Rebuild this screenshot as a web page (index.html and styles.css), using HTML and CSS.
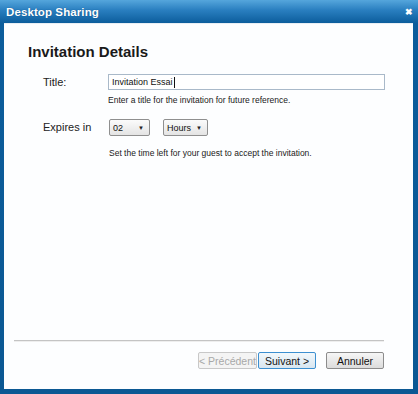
FILE: index.html
```html
<!DOCTYPE html>
<html lang="en">
<head>
    <meta charset="UTF-8">
    <title>Desktop Sharing</title>
    <link rel="stylesheet" href="styles.css">
</head>
<body>
    <div class="window">
        <div class="titlebar">
            <span class="titulo-janela">Desktop Sharing</span>
            <span class="fechar">&#x2716;</span>
        </div>

        <div class="conteudo">
            <h1 class="cabecalho">Invitation Details</h1>

            <div class="linha">
                <span class="rotulo">Title:</span>
                <div class="campo">
                    <div class="entrada">Invitation Essai<span class="cursor"></span></div>
                    <p class="ajuda">Enter a title for the invitation for future reference.</p>
                </div>
            </div>

            <div class="linha linha-expira">
                <span class="rotulo">Expires in</span>
                <div class="campo">
                    <div class="selects">
                        <div class="select sel-numero">02 <span class="seta">&#9660;</span></div>
                        <div class="select sel-unidade">Hours <span class="seta">&#9660;</span></div>
                    </div>
                    <p class="ajuda ajuda-expira">Set the time left for your guest to accept the invitation.</p>
                </div>
            </div>

            <div class="espaco"></div>

            <div class="separador"></div>

            <div class="botoes">
                <button class="botao desativado">&lt; Précédent</button>
                <button class="botao foco">Suivant &gt;</button>
                <button class="botao annuler">Annuler</button>
            </div>
        </div>
    </div>
</body>
</html>
```

FILE: styles.css
```css
body {
    margin: 0;
    font-family: "Liberation Sans", Arial, sans-serif;
}

.window {
    width: 418px;
    height: 394px;
    display: flex;
    flex-direction: column;
    background: linear-gradient(to bottom, #55a6dc 0px, #2a7fc0 10px, #0c5d9c 23px, #0b5893 100%);
}

.titlebar {
    height: 23px;
    display: flex;
    align-items: center;
    justify-content: space-between;
    padding: 0 6px 0 6px;
}

.titulo-janela {
    color: white;
    font-size: 11.5px;
    font-weight: bold;
    letter-spacing: 0.1px;
    text-shadow: 0 0 1px #0a4a80;
}

.fechar {
    color: white;
    font-size: 9px;
    font-weight: bold;
    margin-right: -1px;
}

.conteudo {
    flex: 1;
    background-color: #fdfeff;
    margin: 0 5px 5px 4px;
    display: flex;
    flex-direction: column;
    border-top: 1px solid #e8eef4;
}

.cabecalho {
    margin: 19px 0 0 24px;
    font-size: 15px;
    font-weight: bold;
    color: #1a1a1a;
}

.linha {
    display: flex;
    margin-top: 14px;
}

.linha-expira {
    margin-top: 14px;
}

.rotulo {
    width: 65px;
    margin-left: 39px;
    font-size: 11px;
    color: #222;
    padding-top: 2px;
}

.campo {
    display: flex;
    flex-direction: column;
}

.entrada {
    width: 272px;
    height: 14px;
    border: 1px solid #a9b9c9;
    background-color: white;
    font-size: 9px;
    color: #111;
    padding: 0 0 0 3px;
    line-height: 14px;
    display: flex;
    align-items: center;
}

.cursor {
    display: inline-block;
    width: 1px;
    height: 11px;
    background-color: #111;
    margin-left: 1px;
}

.ajuda {
    margin: 5px 0 0 0;
    font-size: 8.5px;
    color: #1a1a1a;
}

.ajuda-expira {
    margin-top: 12px;
    margin-left: 1px;
}

.selects {
    display: flex;
    gap: 13px;
    margin-left: 1px;
}

.select {
    height: 15px;
    border: 1px solid #8f8f8f;
    border-radius: 2px;
    background: linear-gradient(to bottom, #fbfbfb, #e4e4e4);
    font-size: 9px;
    color: #111;
    display: flex;
    align-items: center;
    justify-content: space-between;
    padding: 0 5px 0 3px;
}

.sel-numero {
    width: 31px;
}

.sel-unidade {
    width: 35px;
}

.seta {
    font-size: 6px;
    color: #222;
}

.espaco {
    flex: 1;
}

.separador {
    height: 1px;
    background-color: #c4c4c4;
    border-bottom: 1px solid #eeeeee;
    margin: 0 29px 0 10px;
}

.botoes {
    display: flex;
    justify-content: flex-end;
    margin: 10px 29px 20px 0;
}

.botao {
    height: 17px;
    font-family: "Liberation Sans", Arial, sans-serif;
    font-size: 10.5px;
    color: #111;
    border: 1px solid #8c8c8c;
    border-radius: 2px;
    background: linear-gradient(to bottom, #f6f6f6, #dcdcdc);
    padding: 0;
}

.desativado {
    width: 59px;
    color: #a8a8a8;
    border-color: #c8c8c8;
    background: #f4f4f4;
}

.foco {
    width: 58px;
    margin-left: 1px;
    border-color: #3c8fd0;
    background: linear-gradient(to bottom, #f2f8fc, #d8e6f0);
}

.annuler {
    width: 58px;
    margin-left: 10px;
}
```
